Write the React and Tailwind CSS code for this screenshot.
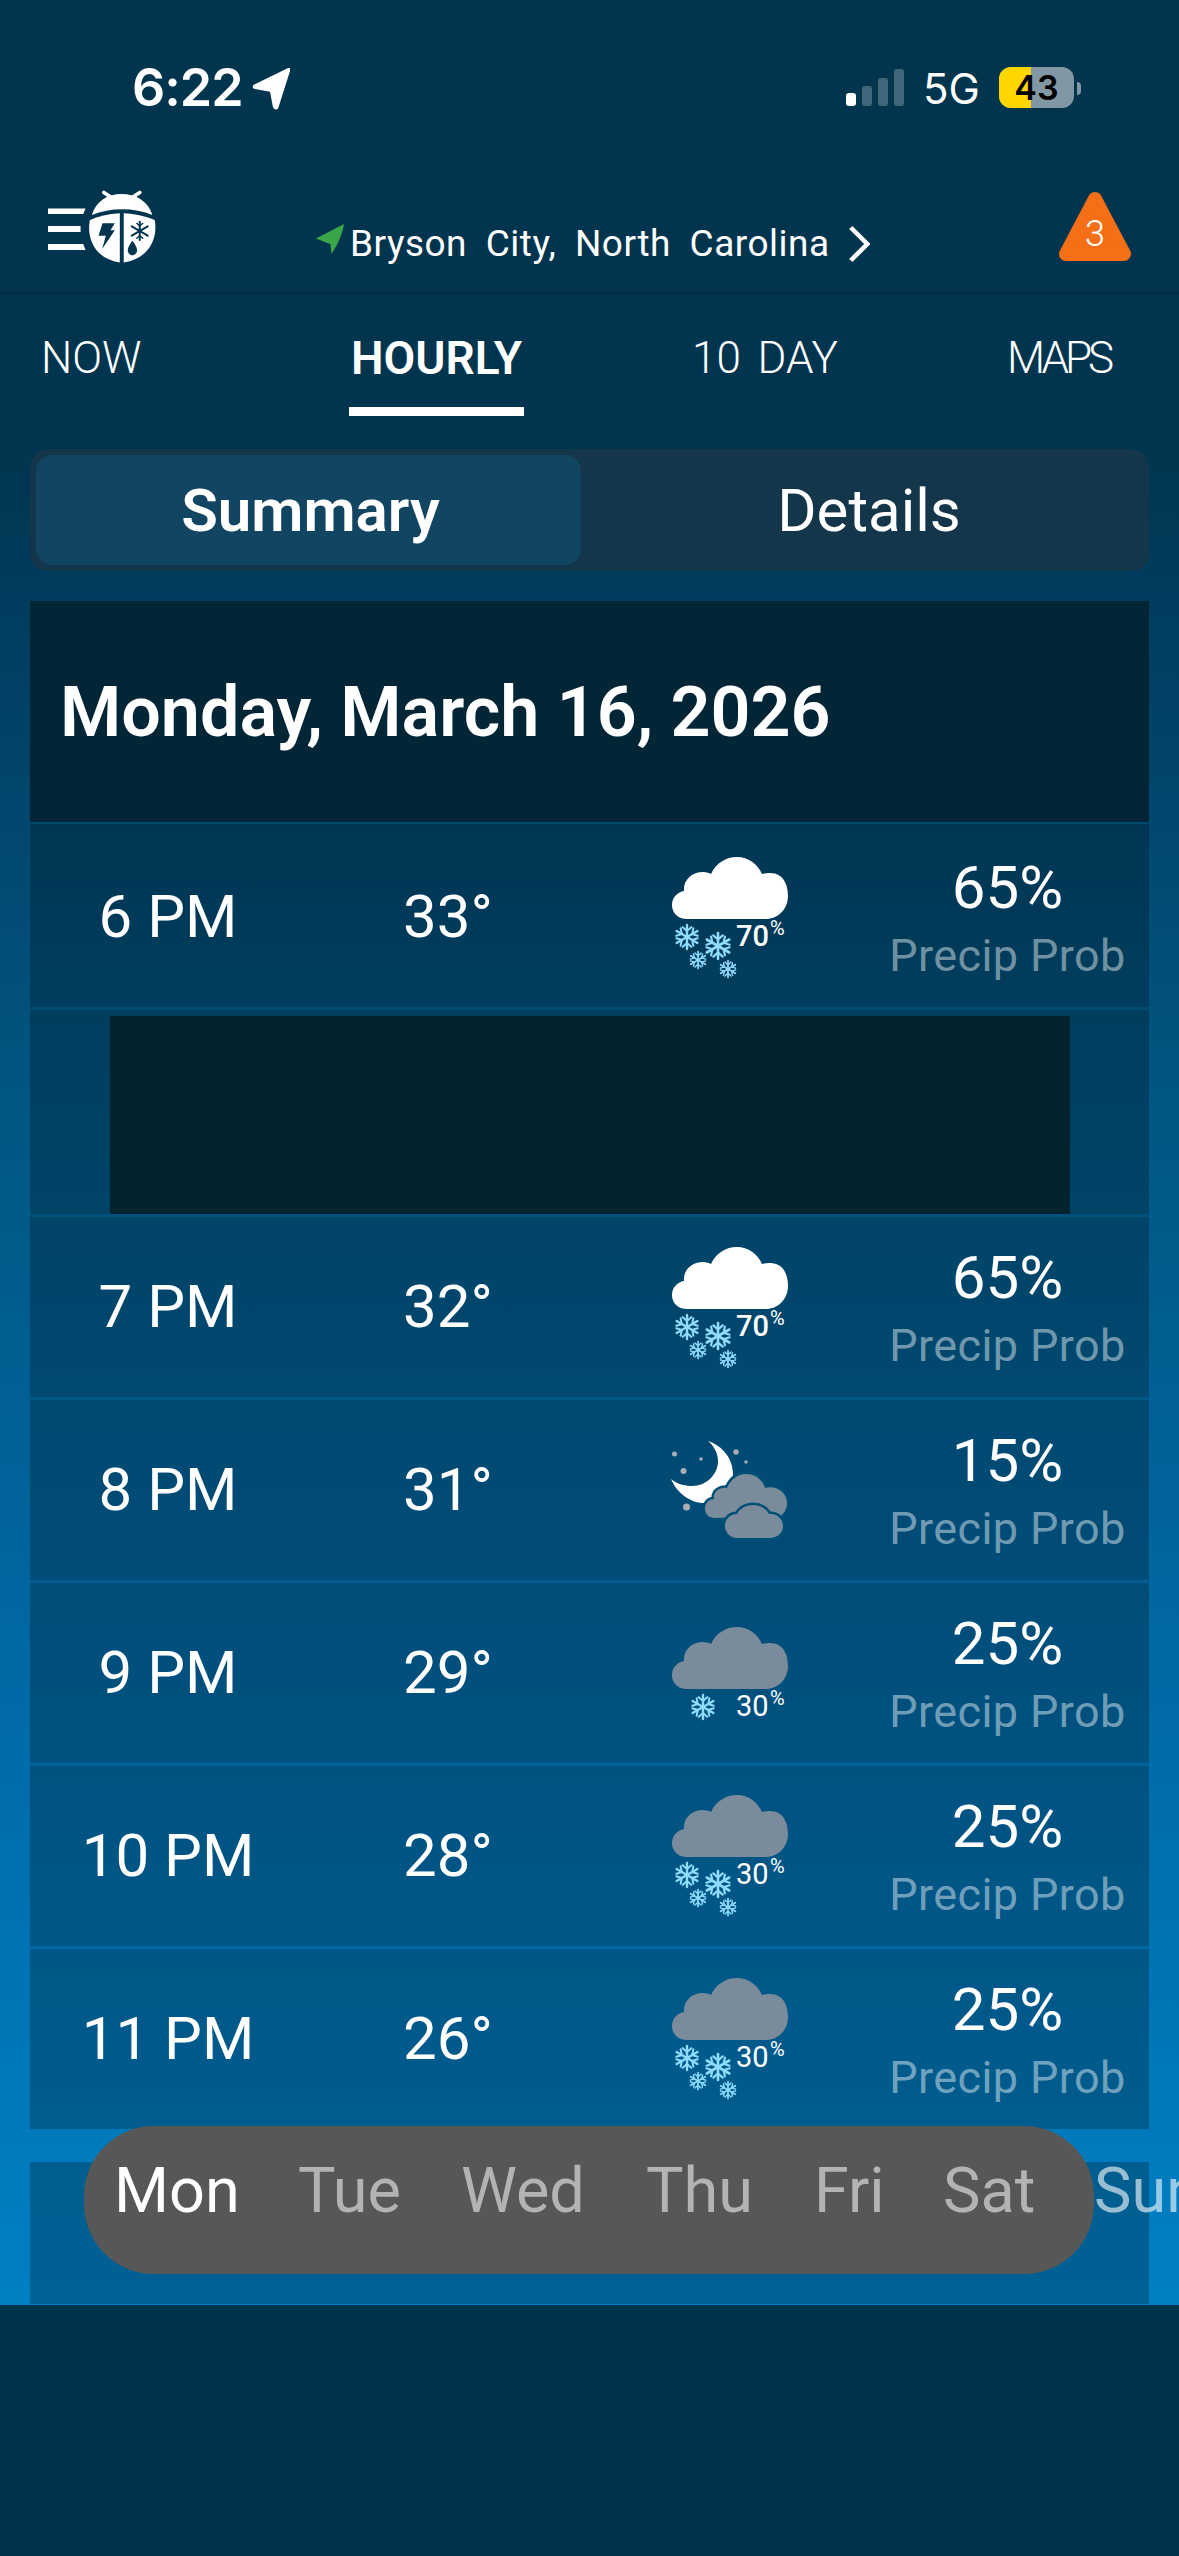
import React from "react";

const Flake = ({ x, y, r }) => (
  <g transform={`translate(${x} ${y}) scale(${r})`} stroke="#8fdcff" strokeWidth="0.2" strokeLinecap="round" fill="none">
    {[0, 60, 120].map((a) => (
      <g key={a} transform={`rotate(${a})`}>
        <path d="M0 -1V1" />
        <path d="M-.36 -.82L0 -.5L.36 -.82M-.36 .82L0 .5L.36 .82" strokeWidth="0.17" />
      </g>
    ))}
  </g>
);

const WeatherIcon = ({ kind, pct }) => {
  if (kind === "moon") {
    return (
      <svg viewBox="0 0 120 110" className="w-[120px] h-[110px] block">
        <path d="M37 0C52 5 62 18 62 33C62 49 49 62 33 62C19 62 6 52 0 38C6 43 14 45 21 45C36 45 47 33 47 20C47 12 43 5 37 0Z" fill="#fff" />
        <g fill="#a9b0b5">
          <circle cx="3.5" cy="13" r="2.5" />
          <circle cx="30" cy="18" r="1.8" />
          <circle cx="12.5" cy="30" r="3" />
          <circle cx="65" cy="11" r="2.7" />
          <circle cx="75" cy="21" r="1.7" />
          <circle cx="15.5" cy="66" r="3.5" />
        </g>
        <path d="M44 77C38 77 34 73 34 68C34 62 38 58 43 58C42 50 49 46 56 47C60 38 67 33 75 33C84 33 92 39 94 47C106 44 116 52 116 62C116 68 113 72 110 75L44 77Z" fill="#7a8b9b" stroke="#004f76" strokeWidth="5" paintOrder="stroke" />
        <path d="M66 97C59 97 54 91 54 85C54 78 59 73 66 73C69 67 76 64 82 64C90 64 95 68 98 73C106 72 112 78 112 85C112 92 106 97 99 97Z" fill="#7a8b9b" stroke="#004f76" strokeWidth="5" paintOrder="stroke" />
      </svg>
    );
  }
  const gray = kind !== "white";
  const one = kind === "gray1";
  return (
    <div className="relative w-[120px] h-[125px]">
      <svg viewBox="0 0 120 125" className="w-[120px] h-[125px] block">
        <path
          d="M16 63C7 63 1 57 1 49C1 41 7 36 13 35C12 24 21 16 32 16C36 16 38 17 40 18C45 7 55 1 66 1C77 1 87 8 91 18C94 17 97 17 99 17C112 17 117 28 117 40C117 54 106 63 95 63Z"
          fill={gray ? "#7a8b9b" : "#ffffff"}
        />
        {one ? (
          <Flake x={32} y={81} r={12} />
        ) : (
          <>
            <Flake x={16} y={81} r={12} />
            <Flake x={47} y={90} r={13} />
            <Flake x={27} y={104} r={8.5} />
            <Flake x={57} y={113} r={8.5} />
          </>
        )}
      </svg>
      <span className={`absolute left-[65px] top-[65px] text-[29px] leading-[30px] text-white ${gray ? "font-normal" : "font-medium"}`}>
        {pct}
        <span className="absolute left-[34px] top-[-4px] text-[20px] leading-[22px] font-normal">%</span>
      </span>
    </div>
  );
};

const Row = ({ time, temp, kind, pct, prob, box, iconTop }) => (
  <div className={`flex ${box} bg-[rgba(0,0,0,0.24)] bg-clip-padding border-[rgba(0,0,0,0.08)]`}>
    <div className="w-[276px] h-[180px] flex items-center justify-center text-[60px] text-white">{time}</div>
    <div className="w-[284px] h-[180px] flex items-center justify-center text-[60px] text-white">{temp}</div>
    <div className={`w-[276px] pl-[81px] ${iconTop}`}>
      <WeatherIcon kind={kind} pct={pct} />
    </div>
    <div className="flex-1 flex flex-col items-center pt-[27px]">
      <div className="text-[60px] leading-[68px] text-white">{prob}</div>
      <div className="mt-[9px] text-[45px] leading-[50px] text-white/45 whitespace-nowrap tracking-[0.4px]">Precip Prob</div>
    </div>
  </div>
);

export default function App() {
  return (
    <div className="w-[1179px] h-[2556px] bg-[#00344c] font-['Roboto',sans-serif] overflow-hidden relative">
      <div className="h-[2305px] bg-[linear-gradient(to_bottom,#01344d_0px,#01354f_450px,#013c5e_600px,#015682_1100px,#006aa6_1700px,#0080c4_2305px)] relative">
        {/* Status bar */}
        <div className="h-[174px] flex justify-between font-['Inter',sans-serif]">
          <div className="flex items-start pl-[132px] pt-[58px] gap-[9px]">
            <span className="text-[52px] leading-[60px] font-semibold text-white tracking-[-1px]">6:22</span>
            <svg viewBox="0 0 40 44" className="w-[38px] h-[42px] mt-[10px]">
              <path d="M38 0C40 -1 41 1 40 3L28 41C27 45 23 44 22 41L19 25L3 22C0 21 0 18 3 17Z" fill="#fff" />
            </svg>
          </div>
          <div className="flex items-start pt-[67px] pr-[98px]">
            <div className="flex items-end gap-[6px] h-[37px] mt-[2px]">
              <div className="w-[10px] h-[13px] rounded-[3px] bg-white" />
              <div className="w-[10px] h-[20px] rounded-[3px] bg-white/25" />
              <div className="w-[10px] h-[28px] rounded-[3px] bg-white/25" />
              <div className="w-[10px] h-[37px] rounded-[3px] bg-white/25" />
            </div>
            <span className="ml-[19px] mt-[2px] w-[55px] text-[42px] leading-[40px] text-white whitespace-nowrap">5G</span>
            <div className="ml-[21px] relative w-[75px] h-[41px] rounded-[12px] overflow-hidden bg-[#8197a3]">
              <div className="w-[32px] h-full bg-[#ffd600]" />
              <span className="absolute inset-0 flex items-center justify-center text-[34px] leading-[41px] font-semibold text-black">43</span>
            </div>
            <div className="w-[4px] h-[13px] mt-[15px] ml-[3px] rounded-r-[4px] bg-[#8197a3]" />
          </div>
        </div>

        {/* Header */}
        <div className="h-[120px] relative border-b-[2px] border-[#022a3f] flex items-start pl-[316px]">
          <svg viewBox="84 54 340 234" className="absolute left-[48px] top-[14px] w-[113px] h-[78px]">
            <path d="M84 115H197L190 132H84ZM84 168H182V186H84ZM84 222H190L197 240H84Z" fill="#fff" />
            <path d="M216 135C228 95 262 72 305 72C350 72 386 95 398 135C345 112 270 112 216 135Z" fill="#fff" />
            <path d="M252 67L275 82M360 67L337 82" stroke="#fff" strokeWidth="11" strokeLinecap="round" />
            <path d="M300 130C265 132 235 140 210 150C200 200 220 265 300 278Z" fill="#fff" />
            <path d="M312 130C347 132 380 140 405 150C415 200 392 265 312 278Z" fill="#fff" />
            <path d="M248 160H285L272 181H285L247 237L258 197H236Z" fill="#01344d" />
            <g stroke="#01344d" strokeWidth="6" strokeLinecap="round" fill="none">
              <path d="M360 155V210M336 169L384 197M384 169L336 197" />
              <path d="M351 160L360 168L369 160M351 205L360 197L369 205" strokeWidth="4" />
            </g>
            <path d="M338 212C350 228 352 236 352 242C352 250 345 256 338 256C331 256 324 250 324 242C324 236 326 228 338 212Z" fill="#01344d" />
          </svg>
          <div className="flex items-center mt-[48px]">
            <svg viewBox="0 0 30 32" className="w-[29px] h-[31px] mt-[-10px]">
              <path d="M29 0L0 15L15 21L16 31C22 22 27 12 29 0Z" fill="#3aa64a" />
            </svg>
            <span className="ml-[5px] w-[478px] text-[37px] leading-[44px] text-white [word-spacing:9px] tracking-[0.5px] whitespace-nowrap">Bryson City, North Carolina</span>
            <svg viewBox="0 0 24 40" className="w-[22px] h-[38px] ml-[20px]">
              <path d="M3 2L21 20L3 38" stroke="#fff" strokeWidth="5" fill="none" />
            </svg>
          </div>
          <svg viewBox="0 0 72 70" className="absolute left-[1059px] top-[17px] w-[72px] h-[70px]">
            <path d="M36 8L65 63H7Z" fill="#f56f17" stroke="#f56f17" strokeWidth="14" strokeLinejoin="round" />
            <text x="36" y="55" textAnchor="middle" fontSize="36" fontWeight="300" fill="#fff" fontFamily="Roboto">3</text>
          </svg>
        </div>

        {/* Tabs */}
        <div className="h-[123px] flex items-start pl-[41px] pt-[41px] text-[44px] leading-[46px] text-white">
          <span className="w-[308px] font-light">NOW</span>
          <div className="w-[175px] flex flex-col items-center">
            <span className="font-semibold text-[46px] whitespace-nowrap">HOURLY</span>
            <div className="w-[175px] h-[9px] bg-white mt-[26px]" />
          </div>
          <span className="ml-[168px] w-[147px] font-light [word-spacing:6px] whitespace-nowrap">10 DAY</span>
          <span className="ml-[168px] font-light tracking-[-4px]">MAPS</span>
        </div>

        {/* Segmented */}
        <div className="mx-[30px] mt-[32px] h-[122px] rounded-[18px] bg-[#14364a] flex p-[6px] items-stretch">
          <div className="w-[545px] rounded-[16px] bg-[#114561] flex items-center justify-center pl-[4px] pt-[2px] text-[60px] font-semibold text-white">Summary</div>
          <div className="flex-1 flex items-center justify-center pl-[14px] pt-[2px] text-[60px] text-white">Details</div>
        </div>

        {/* Card list */}
        <div className="mx-[30px] mt-[30px]">
          <div className="h-[221px] mb-[2px] pt-[2px] bg-[#032637] flex items-center pl-[30px] text-[70px] font-semibold text-white">Monday, March 16, 2026</div>
          <Row time="6 PM" temp="33°" kind="white" pct="70" prob="65%" box="h-[186px] pt-[3px] border-b-[3px]" iconTop="pt-[29px]" />
          <div className="h-[207px] flex justify-center pt-[6px] bg-[rgba(0,0,0,0.24)] bg-clip-padding border-b-[3px] border-[rgba(0,0,0,0.08)]">
            <div className="w-[960px] h-[198px] bg-[#05222f]" />
          </div>
          <Row time="7 PM" temp="32°" kind="white" pct="70" prob="65%" box="h-[183px] border-b-[3px]" iconTop="pt-[29px]" />
          <Row time="8 PM" temp="31°" kind="moon" prob="15%" box="h-[183px] border-b-[3px]" iconTop="pt-[41px]" />
          <Row time="9 PM" temp="29°" kind="gray1" pct="30" prob="25%" box="h-[183px] border-b-[3px]" iconTop="pt-[43px]" />
          <Row time="10 PM" temp="28°" kind="gray" pct="30" prob="25%" box="h-[183px] border-b-[3px]" iconTop="pt-[28px]" />
          <Row time="11 PM" temp="26°" kind="gray" pct="30" prob="25%" box="h-[180px]" iconTop="pt-[28px]" />
          <div className="mt-[33px] h-[142px] bg-[rgba(0,0,0,0.24)]" />
        </div>

        {/* Day pill */}
        <div className="absolute left-[84px] top-[2126px] w-[1010px] h-[148px] rounded-[70px] bg-[#575757] pl-[30px] pt-[31px]">
          <div className="flex text-[63px] leading-[68px] text-[#b3b3b3] whitespace-nowrap">
            <span className="text-white w-[184px]">Mon</span>
            <span className="w-[163px]">Tue</span>
            <span className="w-[185px]">Wed</span>
            <span className="w-[168px]">Thu</span>
            <span className="w-[129px]">Fri</span>
            <span>Sat</span>
          </div>
        </div>
        <span className="absolute left-[1094px] top-[2157px] text-[63px] leading-[68px] text-white/60 whitespace-nowrap">Sun</span>
      </div>
    </div>
  );
}
